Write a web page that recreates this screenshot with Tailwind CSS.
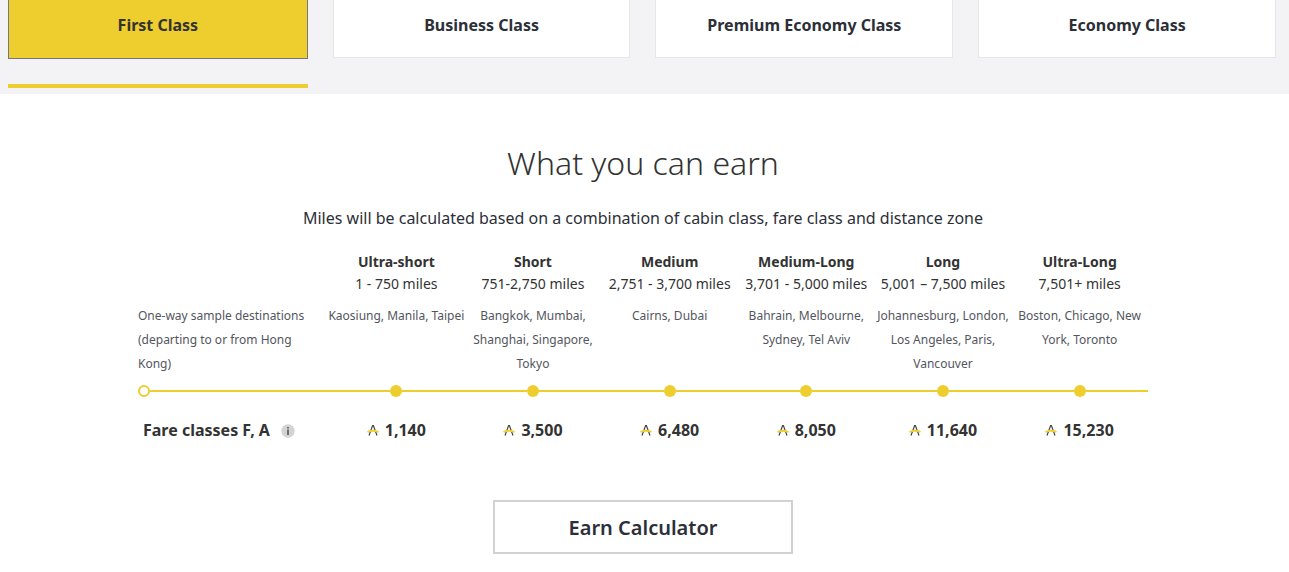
<!DOCTYPE html>
<html lang="en">
<head>
<meta charset="UTF-8" />
<meta name="viewport" content="width=device-width, initial-scale=1" />
<title>What you can earn</title>
<script src="https://cdn.jsdelivr.net/npm/@tailwindcss/browser@4"></script>
</head>
<body class="bg-white font-['Noto_Sans','Open_Sans',sans-serif] text-[#333]">

  <!-- Icon used in front of every miles amount -->
  <svg class="hidden">
    <symbol id="miles" viewBox="0 0 12 12">
      <path d="M2 11.5L5.6 1.5h.8L10 11.5" fill="none" stroke="#444" stroke-width="1.2" />
      <path d="M0.5 8C4 6.4 8 6.4 11.5 8" fill="none" stroke="#eece2e" stroke-width="1.8" />
    </symbol>
  </svg>

  <!-- Cabin class tabs -->
  <nav class="bg-[#f3f3f5] pl-2 pr-[13px] pb-1.5">
    <div class="grid grid-cols-[300fr_298fr_298fr_298fr] gap-[25px] items-start font-bold text-[#2c2f38]">
      <div>
        <button class="block w-full bg-[#eece2e] border border-t-0 border-[#74777c] pt-[13px] pb-[21px] text-[#333]">First Class</button>
        <div class="mt-[25px] h-1 bg-[#eece2e]"></div>
      </div>
      <button class="bg-white border border-t-0 border-[#e6e6e6] pt-[13px] pb-5">Business Class</button>
      <button class="bg-white border border-t-0 border-[#e6e6e6] pt-[13px] pb-5">Premium Economy Class</button>
      <button class="bg-white border border-t-0 border-[#e6e6e6] pt-[13px] pb-5">Economy Class</button>
    </div>
  </nav>

  <!-- Earnings -->
  <main class="pr-[3px] text-center">
    <div class="max-w-[1010px] mx-auto pt-[47px]">
      <h1 class="text-[32px] leading-[44px] font-light">What you can earn</h1>
      <p class="mt-[21px] mb-[21px] text-[#2c2f38]">Miles will be calculated based on a combination of cabin class, fare class and distance zone</p>

      <table class="w-full table-fixed">
        <thead class="text-sm leading-[22px]">
          <tr>
            <td class="w-[190px]"></td>
            <th scope="col" class="font-normal"><b class="block">Ultra-short</b>1 - 750 miles</th>
            <th scope="col" class="font-normal"><b class="block">Short</b>751-2,750 miles</th>
            <th scope="col" class="font-normal"><b class="block">Medium</b>2,751 - 3,700 miles</th>
            <th scope="col" class="font-normal"><b class="block">Medium-Long</b>3,701 - 5,000 miles</th>
            <th scope="col" class="font-normal"><b class="block">Long</b>5,001 – 7,500 miles</th>
            <th scope="col" class="font-normal"><b class="block">Ultra-Long</b>7,501+ miles</th>
          </tr>
        </thead>
        <tbody>
          <tr class="align-top text-xs leading-6 text-[#53565e]">
            <th scope="row" class="pt-[9px] pb-[9px] pr-4 text-left font-normal">One-way sample destinations (departing to or from Hong Kong)</th>
            <td class="pt-[9px]">Kaosiung, Manila, Taipei</td>
            <td class="pt-[9px] px-2">Bangkok, Mumbai, Shanghai, Singapore, Tokyo</td>
            <td class="pt-[9px]">Cairns, Dubai</td>
            <td class="pt-[9px] px-2">Bahrain, Melbourne, Sydney, Tel Aviv</td>
            <td class="pt-[9px]">Johannesburg, London, Los Angeles, Paris, Vancouver</td>
            <td class="pt-[9px]">Boston, Chicago, New York, Toronto</td>
          </tr>
          <tr aria-hidden="true">
            <td><div class="flex items-center"><i class="size-3 rounded-full border-2 border-[#eece2e]"></i><i class="h-0.5 flex-1 bg-[#eece2e]"></i></div></td>
            <td><div class="flex items-center"><i class="h-0.5 flex-1 bg-[#eece2e]"></i><i class="size-3 rounded-full bg-[#eece2e]"></i><i class="h-0.5 flex-1 bg-[#eece2e]"></i></div></td>
            <td><div class="flex items-center"><i class="h-0.5 flex-1 bg-[#eece2e]"></i><i class="size-3 rounded-full bg-[#eece2e]"></i><i class="h-0.5 flex-1 bg-[#eece2e]"></i></div></td>
            <td><div class="flex items-center"><i class="h-0.5 flex-1 bg-[#eece2e]"></i><i class="size-3 rounded-full bg-[#eece2e]"></i><i class="h-0.5 flex-1 bg-[#eece2e]"></i></div></td>
            <td><div class="flex items-center"><i class="h-0.5 flex-1 bg-[#eece2e]"></i><i class="size-3 rounded-full bg-[#eece2e]"></i><i class="h-0.5 flex-1 bg-[#eece2e]"></i></div></td>
            <td><div class="flex items-center"><i class="h-0.5 flex-1 bg-[#eece2e]"></i><i class="size-3 rounded-full bg-[#eece2e]"></i><i class="h-0.5 flex-1 bg-[#eece2e]"></i></div></td>
            <td><div class="flex items-center"><i class="h-0.5 flex-1 bg-[#eece2e]"></i><i class="size-3 rounded-full bg-[#eece2e]"></i><i class="h-0.5 flex-1 bg-[#eece2e]"></i></div></td>
          </tr>
          <tr class="font-bold">
            <th scope="row" class="pt-[21px] pl-[5px]">
              <div class="flex items-center gap-[11px]">Fare classes F, A
                <button class="pt-0.5" aria-label="More information">
                  <svg class="size-3.5" viewBox="0 0 14 14"><circle cx="7" cy="7" r="6.7" fill="#d3d3d5" /><path d="M6.2 3h1.6v1.6H6.2zM6.2 5.6h1.6V11H6.2z" fill="#555" /></svg>
                </button>
              </div>
            </th>
            <td class="pt-[21px]"><div class="flex items-center justify-center gap-1.5"><svg class="size-3"><use href="#miles" /></svg>1,140</div></td>
            <td class="pt-[21px]"><div class="flex items-center justify-center gap-1.5"><svg class="size-3"><use href="#miles" /></svg>3,500</div></td>
            <td class="pt-[21px]"><div class="flex items-center justify-center gap-1.5"><svg class="size-3"><use href="#miles" /></svg>6,480</div></td>
            <td class="pt-[21px]"><div class="flex items-center justify-center gap-1.5"><svg class="size-3"><use href="#miles" /></svg>8,050</div></td>
            <td class="pt-[21px]"><div class="flex items-center justify-center gap-1.5"><svg class="size-3"><use href="#miles" /></svg>11,640</div></td>
            <td class="pt-[21px]"><div class="flex items-center justify-center gap-1.5"><svg class="size-3"><use href="#miles" /></svg>15,230</div></td>
          </tr>
        </tbody>
      </table>

      <button class="mt-[58px] w-[300px] pt-3 pb-2.5 border-2 border-[#d2d2d2] text-xl font-semibold text-[#2c2f38]">Earn Calculator</button>
    </div>
  </main>

</body>
</html>
